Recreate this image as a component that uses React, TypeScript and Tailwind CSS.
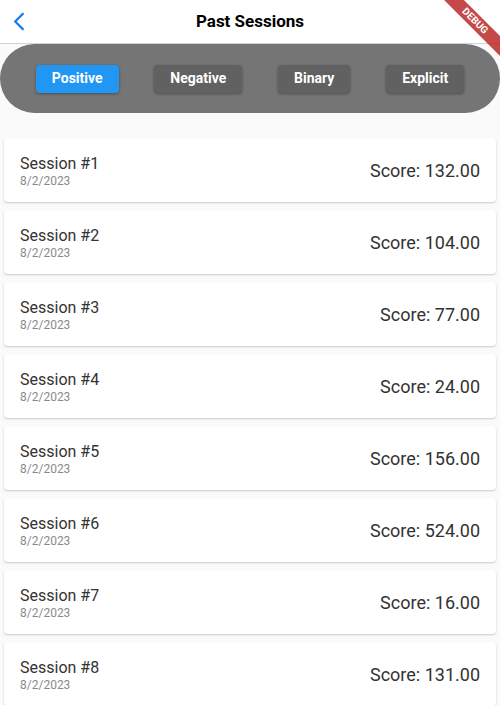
const sessions = [
  { id: 1, score: '132.00' },
  { id: 2, score: '104.00' },
  { id: 3, score: '77.00' },
  { id: 4, score: '24.00' },
  { id: 5, score: '156.00' },
  { id: 6, score: '524.00' },
  { id: 7, score: '16.00' },
  { id: 8, score: '131.00' },
];

const filters = ['Positive', 'Negative', 'Binary', 'Explicit'];

function BackIcon() {
  return (
    <svg viewBox="0 0 12 20" className="h-[19px] w-[12px]" fill="none" aria-hidden="true">
      <path
        d="M10 2 L2 10 L10 18"
        stroke="#1a7cf0"
        strokeWidth="2.4"
        strokeLinecap="round"
        strokeLinejoin="round"
      />
    </svg>
  );
}

export default function App() {
  return (
    <div className="relative h-[705px] w-[500px] overflow-hidden bg-[#fafafa] font-['Roboto',sans-serif]">
      <header className="flex h-[44px] items-center border-b border-[#d4d4d4] bg-white px-[13px]">
        <BackIcon />
        <h1 className="flex-1 pr-[12px] pt-[1px] text-center text-[17px] font-bold text-black">Past Sessions</h1>
      </header>

      <div className="flex h-[69px] items-center justify-evenly rounded-full bg-[#757575]">
        {filters.map((f, i) => (
          <button
            key={f}
            className={`h-[28px] rounded-[4px] px-[16px] text-[14px] font-bold text-white shadow-[0_1px_3px_rgba(0,0,0,0.35)] ${
              i === 0 ? 'bg-[#2196f3]' : 'bg-[#616161]'
            }`}
          >
            {f}
          </button>
        ))}
      </div>

      <div className="mt-[25px] flex flex-col gap-[8px] px-[4px]">
        {sessions.map((s) => (
          <div
            key={s.id}
            className="flex h-[64px] items-center justify-between rounded-[4px] bg-white px-[16px] shadow-[0_1px_2px_rgba(0,0,0,0.2)]"
          >
            <div className="flex flex-col pt-[2px]">
              <span className="text-[16px] leading-[20px] text-[#333333]">Session #{s.id}</span>
              <span className="text-[12px] leading-[14px] text-[#8a8a8a]">8/2/2023</span>
            </div>
            <span className="pt-[1px] text-[18px] text-[#333333]">Score: {s.score}</span>
          </div>
        ))}
      </div>

      <div className="absolute right-[-30px] top-[14px] flex h-[14px] w-[110px] rotate-45 items-center justify-center bg-[#b71c1c]/80">
        <span className="text-[10px] font-bold leading-none text-white">DEBUG</span>
      </div>
    </div>
  );
}
